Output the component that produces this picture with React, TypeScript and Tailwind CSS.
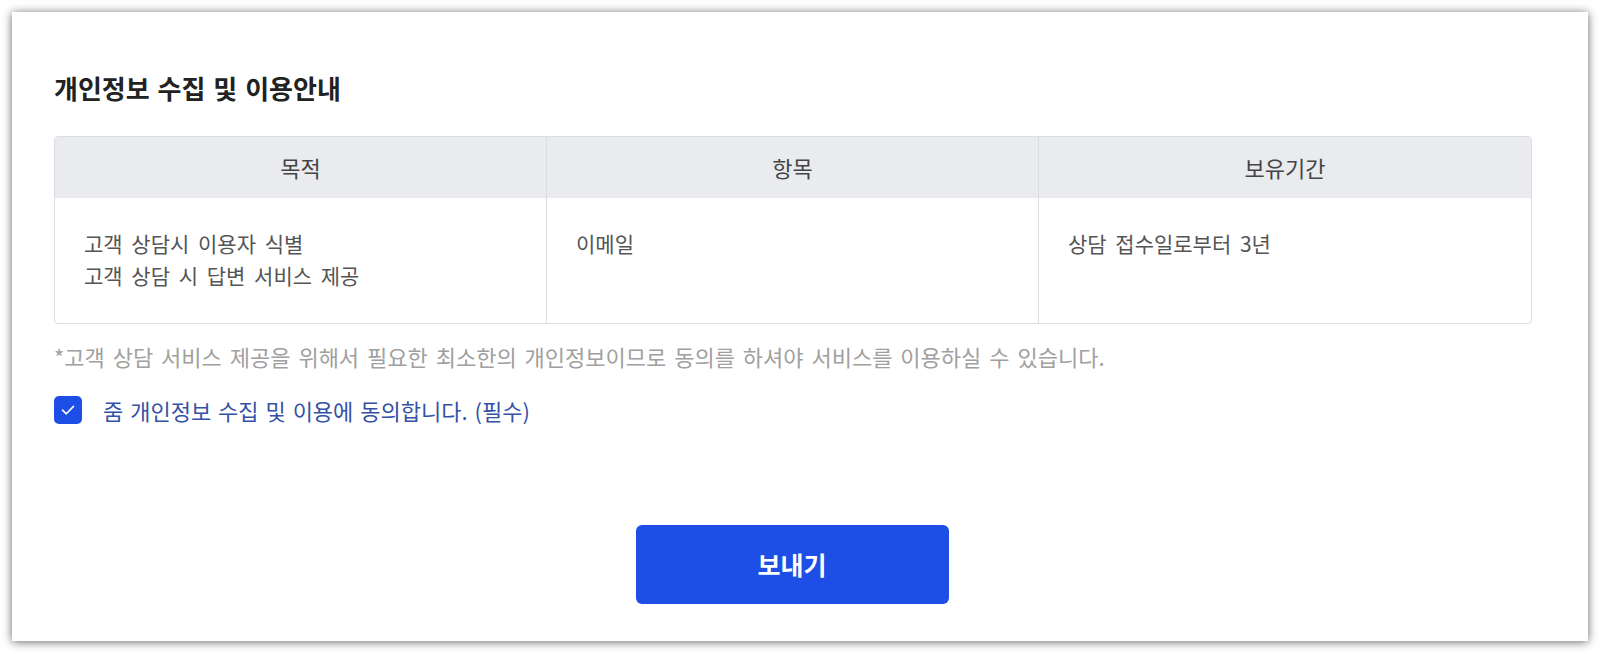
import React from "react";

const font = { fontFamily: '"Noto Sans CJK KR", "Noto Sans", sans-serif' };

export default function App() {
  return (
    <div className="w-[1600px] h-[654px] bg-white p-[12px] box-border" style={font}>
      <div className="w-[1576px] h-[629px] bg-white shadow-[0_1px_9px_rgba(0,0,0,0.6)] pl-[42px] pr-[56px] pt-[60px] flex flex-col">
        <h2 className="text-[26px] leading-[32px] font-bold text-[#222] [word-spacing:2px]">개인정보 수집 및 이용안내</h2>
        <div className="mt-[32px] w-[1478px] border border-[#dcdde0] rounded-[4px] overflow-hidden">
          <div className="grid grid-cols-3 bg-[#e9ebef] h-[61px] text-[22px] text-[#444]">
            <div className="flex items-center justify-center border-r border-[#dcdde0]">목적</div>
            <div className="flex items-center justify-center border-r border-[#dcdde0]">항목</div>
            <div className="flex items-center justify-center">보유기간</div>
          </div>
          <div className="grid grid-cols-3 h-[125px] text-[21px] leading-[32px] text-[#555] [word-spacing:4px]">
            <div className="border-r border-[#dcdde0] px-[29px] pt-[29px]">
              <div>고객 상담시 이용자 식별</div>
              <div>고객 상담 시 답변 서비스 제공</div>
            </div>
            <div className="border-r border-[#dcdde0] px-[29px] pt-[29px]">
              <div>이메일</div>
            </div>
            <div className="px-[29px] pt-[29px]">
              <div>상담 접수일로부터 3년</div>
            </div>
          </div>
        </div>
        <p className="mt-[18px] text-[22px] leading-[28px] text-[#a0a0a0] [word-spacing:3px]">
          *고객 상담 서비스 제공을 위해서 필요한 최소한의 개인정보이므로 동의를 하셔야 서비스를 이용하실 수 있습니다.
        </p>
        <label className="mt-[26px] flex items-center gap-[21px]">
          <span className="w-[28px] h-[28px] rounded-[5px] bg-[#1d4fe6] flex items-center justify-center">
            <svg width="18" height="18" viewBox="0 0 18 18" fill="none">
              <path d="M3.5 9.2 L7.3 12.8 L14.5 5.4" stroke="white" strokeWidth="1.6" strokeLinecap="round" strokeLinejoin="round" />
            </svg>
          </span>
          <span className="text-[22px] leading-[28px] text-[#3352a6] [word-spacing:2px]">줌 개인정보 수집 및 이용에 동의합니다. (필수)</span>
        </label>
        <div className="flex-1" />
        <div className="flex justify-center pb-[37px]">
          <button className="w-[313px] h-[79px] rounded-[6px] bg-[#1d4fe6] text-white text-[25px] font-bold ml-[-2px]">
            보내기
          </button>
        </div>
      </div>
    </div>
  );
}
